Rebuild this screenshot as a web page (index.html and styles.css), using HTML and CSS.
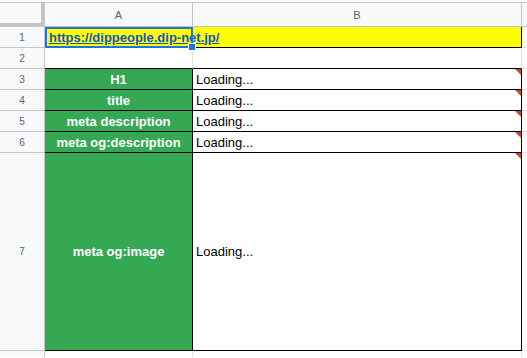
FILE: index.html
```html
<!DOCTYPE html>
<html>
<head>
<meta charset="utf-8">
<link rel="stylesheet" href="styles.css">
</head>
<body>
<div class="sheet">
  <div class="corner"></div>
  <div class="colhead">A</div>
  <div class="colhead">B</div>
  <div class="colhead extra"></div>

  <div class="rowhead">1</div>
  <div class="cell url"><a class="link" href="#">https://dippeople.dip-net.jp/</a><span class="sel"><span class="handle"></span></span></div>
  <div class="cell urlb"></div>
  <div class="cell extra"></div>

  <div class="rowhead">2</div>
  <div class="cell blank"></div>
  <div class="cell blank"></div>
  <div class="cell extra"></div>

  <div class="rowhead">3</div>
  <div class="cell label">H1</div>
  <div class="cell value note">Loading...</div>
  <div class="cell extra"></div>

  <div class="rowhead">4</div>
  <div class="cell label">title</div>
  <div class="cell value note">Loading...</div>
  <div class="cell extra"></div>

  <div class="rowhead">5</div>
  <div class="cell label">meta description</div>
  <div class="cell value note">Loading...</div>
  <div class="cell extra"></div>

  <div class="rowhead">6</div>
  <div class="cell label">meta og:description</div>
  <div class="cell value note">Loading...</div>
  <div class="cell extra"></div>

  <div class="rowhead">7</div>
  <div class="cell label">meta og:image</div>
  <div class="cell value note">Loading...</div>
  <div class="cell extra"></div>

  <div class="rowhead"></div>
  <div class="cell"></div>
  <div class="cell"></div>
  <div class="cell extra"></div>
</div>
</body>
</html>
```

FILE: styles.css
```css
html, body {
  margin: 0;
  padding: 0;
  background: #fff;
  overflow: hidden;
}
body {
  padding-top: 2px;
  font-family: "Liberation Sans", Arial, sans-serif;
}
.sheet {
  display: grid;
  grid-template-columns: 45px 148px 329px 1fr;
  grid-template-rows: 24px 21px 21px 21px 21px 21px 21px 198px 20px;
  border-top: 1px solid #c4c7c5;
  width: 527px;
  height: 355px;
  box-sizing: border-box;
}
.sheet > div {
  box-sizing: border-box;
}
.corner {
  background: #f8f9fa;
  border-right: 4px solid #c4c4c4;
  border-bottom: 4px solid #c4c4c4;
}
.colhead {
  background: #f8f9fa;
  border-right: 1px solid #c4c7c5;
  border-bottom: 1px solid #c4c7c5;
  color: #5f6368;
  font-size: 11px;
  display: flex;
  align-items: center;
  justify-content: center;
}
.rowhead {
  background: #f8f9fa;
  border-right: 1px solid #c4c7c5;
  border-bottom: 1px solid #c4c7c5;
  color: #5f6368;
  font-size: 10px;
  display: flex;
  align-items: center;
  justify-content: center;
}
.cell {
  border-right: 1px solid #e2e3e3;
  border-bottom: 1px solid #e2e3e3;
  font-size: 13px;
  display: flex;
  align-items: center;
  white-space: nowrap;
}
.cell.extra {
  border-right: none;
}
.colhead.extra {
  border-right: none;
}
.url {
  background: #ffff00;
  border-bottom: 1px solid #000;
  border-right: 1px solid #ffff00;
  position: relative;
  z-index: 1;
  padding-left: 4px;
  overflow: visible;
}
.link {
  color: #1155cc;
  font-weight: bold;
  text-decoration: underline;
}
.sel {
  position: absolute;
  top: 0;
  left: 0;
  right: -1px;
  bottom: -1px;
  border: 2px solid #1a73e8;
}
.handle {
  position: absolute;
  right: -5px;
  bottom: -5px;
  width: 6px;
  height: 6px;
  background: #1a73e8;
  border: 1px solid #fff;
}
.urlb {
  background: #ffff00;
  border-bottom: 1px solid #000;
  border-right: 1px solid #000;
}
.blank {
  border-bottom: 1px solid #000;
}
.label {
  background: #34a853;
  color: #fff;
  font-weight: bold;
  justify-content: center;
  border-right: 1px solid #000;
  border-bottom: 1px solid #000;
}
.value {
  color: #000;
  padding-left: 3px;
  border-right: 1px solid #000;
  border-bottom: 1px solid #000;
  position: relative;
}
.note::after {
  content: "";
  position: absolute;
  top: 0;
  right: 0;
  width: 0;
  height: 0;
  border-top: 6px solid #c5483a;
  border-left: 6px solid transparent;
}
```
